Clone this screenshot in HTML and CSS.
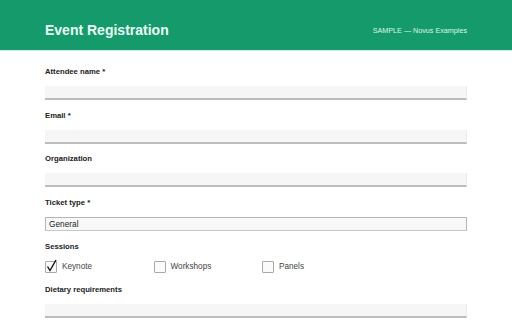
FILE: index.html
```html
<!DOCTYPE html>
<html>
  <head>
    <meta name="viewport" content="width=device-width, initial-scale=1" />
    <title>Event Registration</title>
    <link rel="stylesheet" href="styles.css">
  </head>
  <body>
    <header class="top-bar">
      <h1>Event Registration</h1>
      <span class="sample-tag">SAMPLE — Novus Examples</span>
    </header>

    <form class="reg-form">
      <div class="field">
        <label class="field-label">Attendee name *</label>
        <div class="text-input"></div>
      </div>
      <div class="field">
        <label class="field-label">Email *</label>
        <div class="text-input"></div>
      </div>
      <div class="field">
        <label class="field-label">Organization</label>
        <div class="text-input"></div>
      </div>
      <div class="field">
        <label class="field-label">Ticket type *</label>
        <div class="select-input">General</div>
      </div>
      <div class="field">
        <label class="field-label">Sessions</label>
        <div class="check-row">
          <div class="check-item">
            <span class="check-box">
              <svg width="14" height="14" viewBox="0 0 14 14">
                <polyline points="2.5,7.5 5,11.5 11,1" fill="none" stroke="#111" stroke-width="1.4" />
              </svg>
            </span>
            Keynote
          </div>
          <div class="check-item">
            <span class="check-box"></span>
            Workshops
          </div>
          <div class="check-item">
            <span class="check-box"></span>
            Panels
          </div>
        </div>
      </div>
      <div class="field">
        <label class="field-label">Dietary requirements</label>
        <div class="text-input"></div>
      </div>
    </form>
  </body>
</html>
```

FILE: styles.css
```css
body {
  margin: 0;
  background-color: white;
  font-family: "Liberation Sans", Arial, sans-serif;
  color: #222;
}
.top-bar {
  height: 51px;
  box-sizing: border-box;
  padding: 10px 45px 0 45px;
  background-color: #149a6b;
  border-bottom: 1px solid #c9f6e5;
  display: flex;
  align-items: center;
  justify-content: space-between;
}
.top-bar h1 {
  margin: 0;
  font-size: 14px;
  font-weight: bold;
  color: #eafff6;
}
.sample-tag {
  font-size: 7.2px;
  color: #dcf8ec;
  padding-top: 1px;
}
.reg-form {
  padding: 16px 45px 0 45px;
}
.field {
  margin-bottom: 10.7px;
}
.field-label {
  display: block;
  font-size: 7.7px;
  line-height: 10px;
  font-weight: bold;
  color: #222;
  margin-bottom: 9px;
}
.text-input {
  height: 14px;
  box-sizing: border-box;
  background-color: #f6f6f6;
  border-right: 1px solid #ececec;
  border-bottom: 2px solid #bdbdbd;
}
.select-input {
  height: 14px;
  box-sizing: border-box;
  background-color: #f8f8f8;
  border: 1px solid #b5b5b5;
  border-bottom-color: #c8c8c8;
  font-size: 8.3px;
  line-height: 12px;
  padding-left: 3px;
  color: #222;
}
.check-row {
  display: flex;
  margin-top: 0;
  margin-bottom: 12px;
}
.check-item {
  width: 108.5px;
  display: flex;
  align-items: center;
  gap: 5px;
  font-size: 8.2px;
  color: #444;
  height: 12px;
}
.check-box {
  width: 12px;
  height: 12px;
  box-sizing: border-box;
  border: 1px solid #aaa;
  border-radius: 1px;
  background-color: #fafafa;
  position: relative;
}
.check-box svg {
  position: absolute;
  left: -1px;
  top: -3px;
}
```
